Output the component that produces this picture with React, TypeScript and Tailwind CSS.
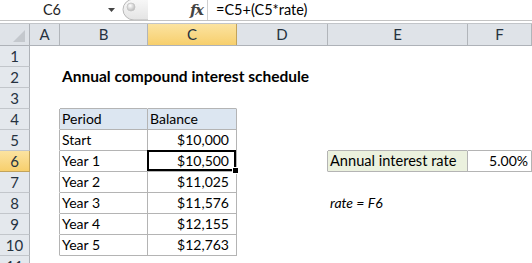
import React from "react";

type C = {
  t?: string;
  cls?: string;
  br?: boolean;
  bb?: boolean;
  bg?: string;
  sel?: boolean;
};

const colW = [
  "w-[30px]",
  "w-[88px]",
  "w-[89px]",
  "w-[91px]",
  "w-[140px]",
  "w-[64px]",
];
const letters = ["A", "B", "C", "D", "E", "F"];

const L = "justify-start pl-[2px]";
const R = "justify-end pr-[7px]";

const rows: C[][] = [
  [{}, {}, {}, {}, {}, {}],
  [{}, { t: "Annual compound interest schedule", cls: L + " font-bold text-[15.5px]" }, {}, {}, {}, {}],
  [{}, { bb: true }, { bb: true }, {}, {}, {}],
  [
    { br: true },
    { t: "Period", cls: L, br: true, bb: true, bg: "bg-[#dce6f1]" },
    { t: "Balance", cls: L, br: true, bb: true, bg: "bg-[#dce6f1]" },
    {},
    {},
    {},
  ],
  [
    { br: true },
    { t: "Start", cls: L, br: true, bb: true },
    { t: "$10,000", cls: R, br: true, bb: true },
    {},
    { bb: true },
    { bb: true },
  ],
  [
    { br: true },
    { t: "Year 1", cls: L, br: true, bb: true },
    { t: "$10,500", cls: R, br: true, bb: true, sel: true },
    { br: true },
    { t: "Annual interest rate", cls: L + " text-[14.6px]", br: true, bb: true, bg: "bg-[#ebf1de]" },
    { t: "5.00%", cls: "justify-end pr-[3px]", br: true, bb: true },
  ],
  [
    { br: true },
    { t: "Year 2", cls: L, br: true, bb: true },
    { t: "$11,025", cls: R, br: true, bb: true },
    {},
    {},
    {},
  ],
  [
    { br: true },
    { t: "Year 3", cls: L, br: true, bb: true },
    { t: "$11,576", cls: R, br: true, bb: true },
    {},
    { t: "rate = F6", cls: L + " italic" },
    {},
  ],
  [
    { br: true },
    { t: "Year 4", cls: L, br: true, bb: true },
    { t: "$12,155", cls: R, br: true, bb: true },
    {},
    {},
    {},
  ],
  [
    { br: true },
    { t: "Year 5", cls: L, br: true, bb: true },
    { t: "$12,763", cls: R, br: true, bb: true },
    {},
    {},
    {},
  ],
  [{}, {}, {}, {}, {}, {}],
];

function Cell({ c, w }: { c: C; w: string }) {
  return (
    <div
      className={[
        "relative h-[21px] shrink-0 flex items-end pb-[2px] whitespace-nowrap border-r border-b",
        w,
        c.br ? "border-r-[#b4b4b4]" : "border-r-transparent",
        c.bb ? "border-b-[#b4b4b4]" : "border-b-transparent",
        c.bg ?? "",
        c.cls ?? "",
      ].join(" ")}
    >
      {c.t && <span className="leading-[17px]">{c.t}</span>}
      {c.sel && (
        <>
          <div className="absolute -left-[1px] -top-[1px] right-0 bottom-0 border-2 border-black z-10" />
          <div className="absolute left-[84px] top-[16px] w-[7px] h-[7px] bg-black border border-white z-20" />
        </>
      )}
    </div>
  );
}

export default function App() {
  return (
    <div
      className="w-[532px] h-[263px] overflow-hidden bg-white text-[14px] text-black"
      style={{ fontFamily: "Lato, 'Liberation Sans', sans-serif" }}
    >
      {/* formula bar */}
      <div className="h-[20px] flex items-center">
        <div className="w-[104px] shrink-0 flex justify-center text-[14.5px] text-[#1e1e1e]">C6</div>
        <div className="w-[14px] shrink-0 flex items-center pl-[4px]">
          <svg width="7" height="4" viewBox="0 0 7 4">
            <path d="M0 0 H7 L3.5 4 Z" fill="#444" />
          </svg>
        </div>
        <svg width="72" height="20" className="shrink-0" viewBox="0 0 72 20">
          <defs>
            <linearGradient id="g1" x1="0" y1="0" x2="0" y2="1">
              <stop offset="0" stopColor="#f8f8f8" />
              <stop offset="1" stopColor="#e4e4e4" />
            </linearGradient>
            <radialGradient id="g2" cx="0.4" cy="0.35" r="0.7">
              <stop offset="0" stopColor="#ffffff" />
              <stop offset="1" stopColor="#b5b5b5" />
            </radialGradient>
          </defs>
          <path d="M30 -1 H16 A11 10.5 0 0 0 16 20 H30" fill="url(#g1)" stroke="#b9b9b9" />
          <circle cx="13" cy="7" r="4" fill="url(#g2)" stroke="#c4c4c4" strokeWidth="0.8" />
        </svg>
        <div
          className="w-[17px] shrink-0 text-[15px] font-bold italic text-[#444] leading-[20px]"
          style={{ fontFamily: "'DejaVu Serif', serif" }}
        >
          <span className="tracking-[-1.5px]">fx</span>
        </div>
        <div className="w-px h-[20px] shrink-0 bg-[#d0d0d0]" />
        <div className="pl-[8px] text-[14.5px] text-black whitespace-nowrap">=C5+(C5*rate)</div>
      </div>
      <div className="h-px bg-[#c3c3c3]" />
      <div className="h-[2px] bg-white" />
      {/* column header */}
      <div className="flex h-[23px] border-t border-[#c2c5c9] border-b border-b-[#aeb2b8] bg-[#dfe3e8] text-[#26323f] text-[15px]">
        <div className="w-[30px] shrink-0 border-r border-[#aeb2b8] relative">
          <svg width="14" height="14" className="absolute right-[3px] bottom-[2px]" viewBox="0 0 14 14">
            <path d="M13 1 V13 H1 Z" fill="#c4c8cd" />
          </svg>
        </div>
        {letters.map((l, i) => (
          <div
            key={l}
            className={[
              "shrink-0 h-full flex items-center justify-center border-r border-[#b1b5ba]",
              colW[i],
              l === "C" ? "bg-gradient-to-b from-[#fbe3a0] to-[#f7cf6c] border-r-[#c2a35b]" : "",
            ].join(" ")}
          >
            {l}
          </div>
        ))}
      </div>
      {/* rows */}
      {rows.map((r, ri) => (
        <div key={ri} className="flex">
          <div
            className={[
              "w-[30px] h-[21px] shrink-0 flex items-center justify-center border-r border-b text-[#26323f] text-[15px]",
              ri === 5
                ? "bg-gradient-to-b from-[#fbe3a0] to-[#f7cf6c] border-b-[#c2a35b] border-r-[#c2a35b]"
                : "bg-[#e4e8ed] border-b-[#c2c6cb] border-r-[#aeb2b8]",
            ].join(" ")}
          >
            {ri + 1}
          </div>
          {r.map((c, ci) => (
            <Cell key={ci} c={c} w={colW[ci]} />
          ))}
        </div>
      ))}
    </div>
  );
}
